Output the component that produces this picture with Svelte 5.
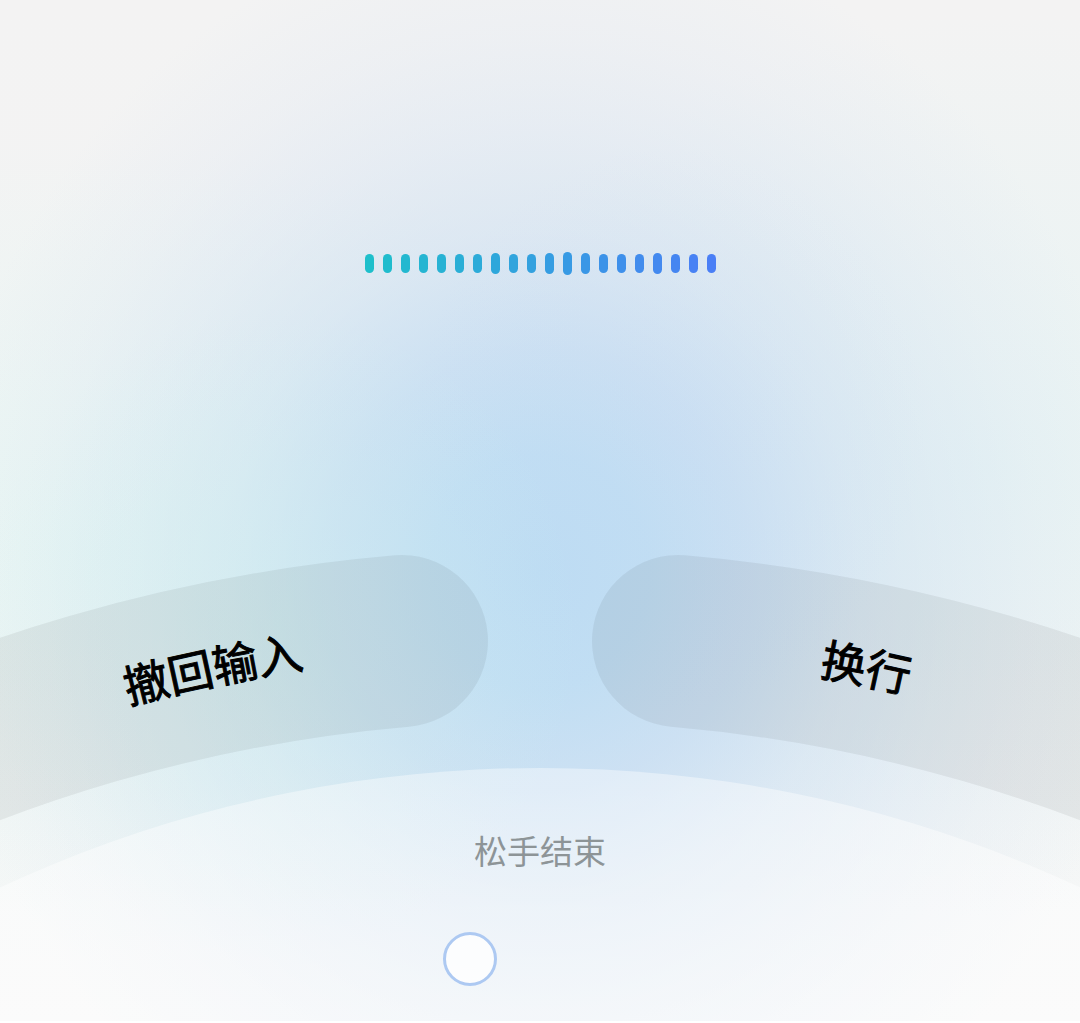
<script lang="ts">
  // 音量条高度
  let levels: number[] = [19, 19, 19, 19, 19, 19, 19, 21, 19, 19, 21, 23, 21, 19, 19, 19, 21, 19, 19, 19];

  // 从青色渐变到蓝色
  const from = [30, 191, 203];
  const to = [74, 127, 246];

  function barColor(i: number) {
    const t = i / (levels.length - 1);
    const rgb = from.map((c, k) => Math.round(c + (to[k] - c) * t));
    return `rgb(${rgb.join(',')})`;
  }
</script>

<main class="voice-panel">
  <section class="wave" aria-label="音量">
    {#each levels as level, i}
      <span class="bar" style="height: {level}px; background-color: {barColor(i)}"></span>
    {/each}
  </section>

  <nav class="actions">
    <button type="button">
      <svg viewBox="0 554 540 270">
        <defs>
          <path id="undo-line" d="M -200 832 A 1586 1586 0 0 1 540 652" />
        </defs>
        <path class="arc" d="M -200 816 A 1603 1603 0 0 1 402 641" />
        <text><textPath href="#undo-line" startOffset="443" text-anchor="middle">撤回输入</textPath></text>
      </svg>
    </button>
    <button type="button">
      <svg viewBox="540 554 540 270">
        <defs>
          <path id="break-line" d="M 540 652 A 1586 1586 0 0 1 1280 832" />
        </defs>
        <path class="arc" d="M 678 641 A 1603 1603 0 0 1 1280 816" />
        <text><textPath href="#break-line" startOffset="325" text-anchor="middle">换行</textPath></text>
      </svg>
    </button>
  </nav>

  <footer class="release">
    <p>松手结束</p>
    <span class="touch"></span>
  </footer>
</main>

<style>
  :global(body) {
    margin: 0;
    background: #fff;
  }

  .voice-panel {
    display: flex;
    flex-direction: column;
    min-height: 100vh;
    box-sizing: border-box;
    border-bottom: 2px solid #fff;
    overflow: hidden;
    font-family: "Noto Sans CJK SC", "Noto Sans", sans-serif;
    background:
      radial-gradient(ellipse 28% 32% at 26% 62%, rgba(206, 242, 238, 0.4), rgba(206, 242, 238, 0) 100%),
      radial-gradient(ellipse 24% 28% at 62% 42%, rgba(190, 208, 244, 0.1), rgba(190, 208, 244, 0) 100%),
      radial-gradient(
        ellipse 56% 64% at 50% 56%,
        rgba(189, 220, 243, 1) 0%,
        rgba(189, 220, 243, 0.92) 18%,
        rgba(190, 217, 242, 0.72) 34%,
        rgba(196, 219, 241, 0.47) 52%,
        rgba(204, 222, 242, 0.32) 68%,
        rgba(214, 226, 242, 0.2) 82%,
        rgba(220, 234, 244, 0) 100%
      ),
      radial-gradient(ellipse 60% 40% at 8% 54%, rgba(226, 248, 243, 0.65), rgba(226, 248, 243, 0) 100%),
      radial-gradient(ellipse 50% 44% at 92% 46%, rgba(224, 243, 243, 0.6), rgba(224, 243, 243, 0) 100%),
      linear-gradient(#f3f3f3 0%, #f3f4f4 60%, #f7f8f8 100%);
  }

  .wave {
    flex: 1;
    display: flex;
    align-items: center;
    justify-content: center;
    gap: 9px;
    padding-bottom: 28px;
  }

  .bar {
    width: 9px;
    border-radius: 5px;
  }

  .actions {
    display: flex;
  }

  .actions button {
    flex: 1;
    min-width: 0;
    padding: 0;
    border: none;
    background: none;
    font-family: inherit;
    cursor: pointer;
  }

  .actions svg {
    display: block;
    width: 100%;
  }

  .arc {
    fill: none;
    stroke: rgba(0, 0, 0, 0.06);
    stroke-width: 172px;
    stroke-linecap: round;
  }

  .actions text {
    font-size: 45px;
    font-weight: 400;
    fill: #000;
    stroke: #000;
    stroke-width: 1px;
  }

  /* 底部弧形区域，向上盖住按钮行的空白 */
  .release {
    position: relative;
    height: 253px;
    margin-top: -56px;
    overflow: hidden;
    pointer-events: none;
  }

  .release::before {
    content: "";
    position: absolute;
    top: 0;
    left: 50%;
    width: 237%;
    aspect-ratio: 1;
    border-radius: 50%;
    transform: translateX(-50%);
    background: linear-gradient(rgba(255, 255, 255, 0.4), rgba(255, 255, 255, 0.48) 8%);
  }

  .release p {
    position: relative;
    margin: 0;
    padding-top: 58px;
    font-size: 33px;
    line-height: 48px;
    text-align: center;
    color: #8d9497;
  }

  .touch {
    position: absolute;
    top: 164px;
    left: 41%;
    width: 48px;
    height: 48px;
    border: 3px solid #adc9f2;
    border-radius: 50%;
    background: rgba(255, 255, 255, 0.8);
  }
</style>
